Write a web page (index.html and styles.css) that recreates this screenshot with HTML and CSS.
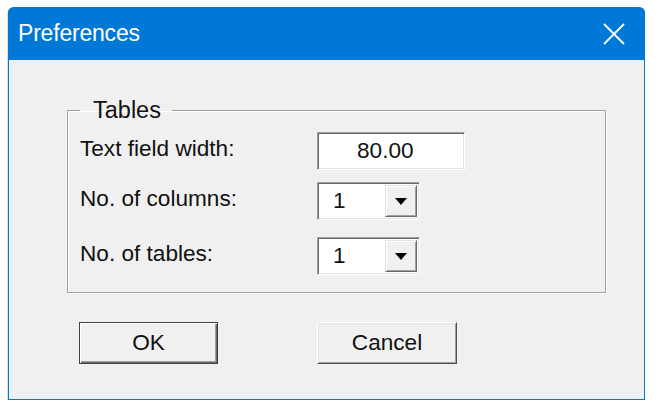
FILE: index.html
```html
<!DOCTYPE html>
<html>
<head>
<meta charset="utf-8">
<link rel="stylesheet" href="styles.css">
</head>
<body>
<div class="window">
  <div class="titlebar">
    <span class="title">Preferences</span>
    <svg class="close" width="22" height="22" viewBox="0 0 22 22"><path d="M1 1 L21 21 M21 1 L1 21" stroke="#fff" stroke-width="1.8" fill="none"/></svg>
  </div>
  <div class="content">
    <fieldset class="group">
      <legend>Tables</legend>
      <div class="row row1">
        <span class="label">Text field width:</span>
        <div class="textfield">80.00</div>
      </div>
      <div class="row row2">
        <span class="label">No. of columns:</span>
        <div class="combo"><span class="val">1</span><span class="drop"><span class="arrow"></span></span></div>
      </div>
      <div class="row row3">
        <span class="label">No. of tables:</span>
        <div class="combo"><span class="val">1</span><span class="drop"><span class="arrow"></span></span></div>
      </div>
    </fieldset>
    <div class="buttons">
      <div class="btn default">OK</div>
      <div class="btn">Cancel</div>
    </div>
  </div>
</div>
</body>
</html>
```

FILE: styles.css
```css
html, body { margin: 0; padding: 0; background: #ffffff; }
body { padding: 7px 0 0 8px; font-family: "Liberation Sans", Arial, sans-serif; }
.window {
  width: 637px; height: 393px; box-sizing: border-box;
  background: #f0f0f0;
  border: 1px solid #0078d7; border-top: none;
  border-radius: 6px 6px 0 0;
  display: flex; flex-direction: column;
  box-shadow: -1px 1px 1px rgba(0,0,0,0.15);
}
.titlebar {
  height: 53px; background: #0078d7; margin: 0 -1px;
  border-radius: 6px 6px 0 0;
  display: flex; align-items: center; justify-content: space-between;
  padding: 0 20px 0 10px;
}
.title { color: #fff; font-size: 23px; letter-spacing: -0.2px; }
.close { display: block; }
.content { padding: 37px 38px 0 58px; color: #111; font-size: 22.6px; }
.group {
  margin: 0; padding: 0 0 17px 12px;
  border: 1px solid #a0a0a0;
  box-shadow: 1px 1px 0 #fff, inset 1px 1px 0 #fff;
}
.group legend { padding: 0 11px 0 13px; margin-left: 0; line-height: 26px; font-size: 23.5px; }
.row { display: flex; align-items: center; }
.row1 { margin-top: 9px; }
.row2 { margin-top: 12px; }
.row3 { margin-top: 17px; }
.label { width: 237px; margin-top: -4px; }
.textfield {
  width: 148px; height: 38px; box-sizing: border-box; background: #fff;
  border-top: 1px solid #a0a0a0; border-left: 1px solid #a0a0a0;
  border-right: 1px solid #fff; border-bottom: 1px solid #fff;
  box-shadow: inset 1px 1px 0 #696969, inset -1px -1px 0 #e3e3e3;
  padding-left: 39px; line-height: 36px;
}
.combo {
  width: 103px; height: 38px; box-sizing: border-box; background: #fff;
  border-top: 1px solid #a0a0a0; border-left: 1px solid #a0a0a0;
  border-right: 1px solid #fff; border-bottom: 1px solid #fff;
  box-shadow: inset 1px 1px 0 #696969, inset -1px -1px 0 #e3e3e3;
  display: flex; align-items: center; padding: 2px;
}
.val { flex: 1; padding-left: 13px; line-height: 32px; }
.drop {
  width: 32px; height: 32px; box-sizing: border-box; background: #f0f0f0;
  border-top: 1px solid #e3e3e3; border-left: 1px solid #e3e3e3;
  border-right: 1px solid #696969; border-bottom: 1px solid #696969;
  box-shadow: inset 1px 1px 0 #fff, inset -1px -1px 0 #a0a0a0;
  display: flex; align-items: center; justify-content: center;
}
.arrow {
  width: 0; height: 0;
  border-left: 6px solid transparent; border-right: 6px solid transparent;
  border-top: 7px solid #000; margin-top: 1px;
}
.buttons { display: flex; padding-left: 12px; margin-top: 29px; gap: 99px; }
.btn {
  width: 139px; height: 42px; box-sizing: border-box; text-align: center;
  line-height: 40px; background: #f0f0f0;
  border-top: 1px solid #fff; border-left: 1px solid #fff;
  border-right: 1px solid #505050; border-bottom: 1px solid #505050;
  box-shadow: inset 1px 1px 0 #e3e3e3, inset -1px -1px 0 #a0a0a0;
}
.btn.default {
  border: 1px solid #404040;
  box-shadow: inset 1px 1px 0 #fff, inset -1px -1px 0 #696969, inset -2px -2px 0 #a0a0a0;
}
.btn + .btn { width: 140px; }
```
